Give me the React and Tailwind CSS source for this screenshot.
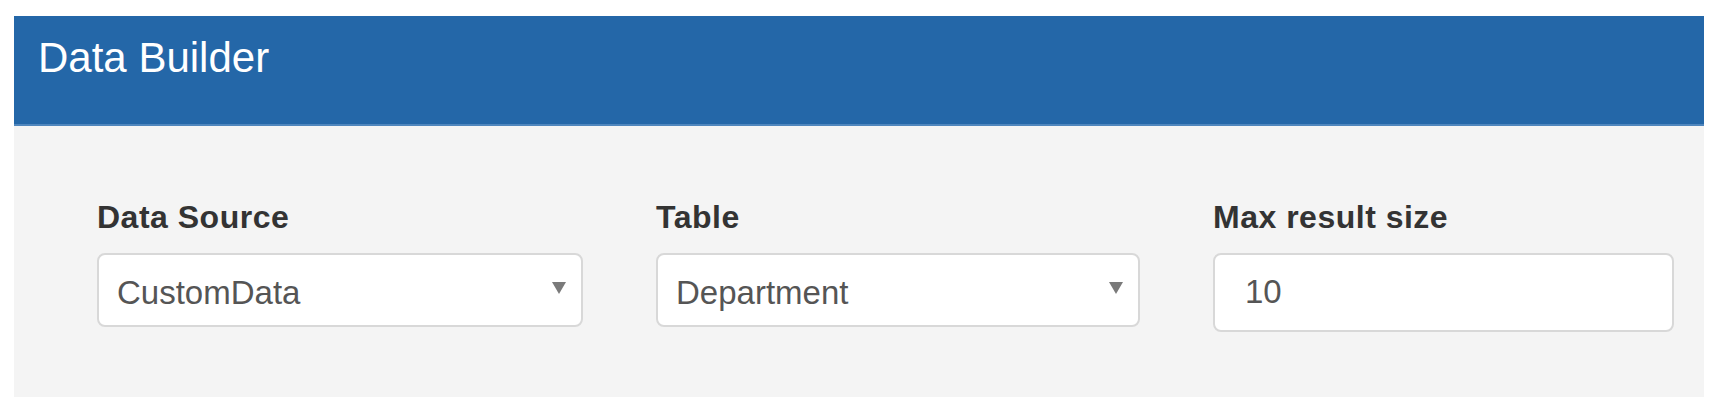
import React from 'react';

// Small caret drawn like the native dropdown arrow
const Caret = () => (
  <svg width="14" height="12" viewBox="0 0 14 12" className="mt-[8px] shrink-0">
    <polygon points="0,0 14,0 7,12" fill="#7a7a7a" />
  </svg>
);

const SelectBox = ({ value }) => (
  <div className="flex justify-between items-start h-[74px] bg-white border-2 border-[#d8d8d8] rounded-[8px] pt-[19px] pl-[18px] pr-[15px]">
    <span className="text-[33px] leading-[38px] text-[#555]">{value}</span>
    <Caret />
  </div>
);

const Field = ({ label, children }) => (
  <div className="flex flex-col">
    <label className="text-[32px] leading-[37px] font-bold text-[#333] mb-[17px] tracking-[0.5px]">{label}</label>
    {children}
  </div>
);

const App = () => {
  return (
    <div className="w-[1712px] h-[406px] bg-white pt-[16px] pl-[14px] font-['Liberation_Sans',Arial,sans-serif]">
      <div className="w-[1690px]">
        <div className="h-[110px] bg-[#2467a8] border-b-2 border-[#4f86bd] pt-[18px] pl-[24px]">
          <h1 className="text-[42px] leading-[48px] text-white">Data Builder</h1>
        </div>

        <div className="h-[271px] bg-[#f4f4f4] pt-[73px] pl-[83px]">
          <div className="grid grid-cols-[486px_484px_461px] gap-x-[73px] items-start">
            <Field label="Data Source">
              <SelectBox value="CustomData" />
            </Field>
            <Field label="Table">
              <SelectBox value="Department" />
            </Field>
            <Field label="Max result size">
              <div className="h-[79px] bg-white border-2 border-[#d8d8d8] rounded-[8px] pt-[18px] pl-[30px]">
                <span className="text-[33px] leading-[38px] text-[#555]">10</span>
              </div>
            </Field>
          </div>
        </div>
      </div>
    </div>
  );
};

export default App;
